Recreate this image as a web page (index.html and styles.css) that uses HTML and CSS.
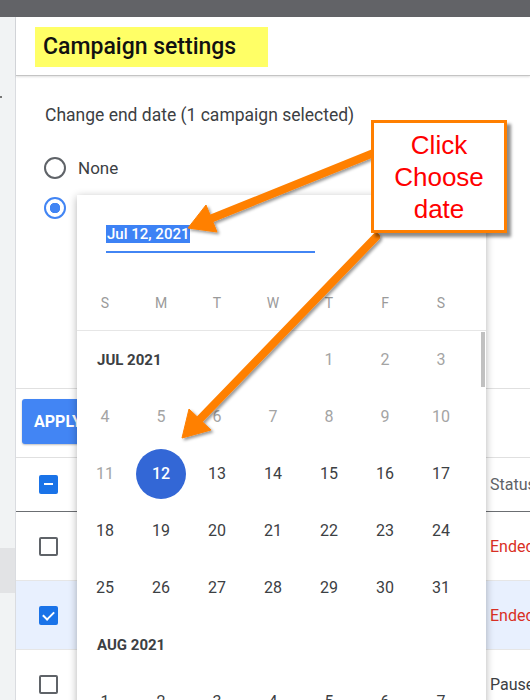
FILE: index.html
```html
<!DOCTYPE html>
<html>
<head>
  <title>Campaign settings</title>
  <link rel="stylesheet" href="styles.css">
</head>
<body>
  <div class="topbar"></div>

  <div class="layout">
    <div class="rail">
      <span class="rail-dot"></span>
      <div class="rail-band"></div>
    </div>

    <div class="panel">
      <div class="panel-head">
        <h1 class="title">Campaign settings</h1>
      </div>

      <div class="settings">
        <p class="label">Change end date (1 campaign selected)</p>
        <div class="radio-row">
          <span class="radio"></span>
          <span>None</span>
        </div>
        <div class="radio-row">
          <span class="radio checked"></span>
        </div>
      </div>

      <div class="actions">
        <button class="apply">APPLY</button>
      </div>

      <!-- campaigns table -->
      <div class="table">
        <div class="row head">
          <div class="cell-check"><span class="box partial"></span></div>
          <div class="cell-gap"></div>
          <div class="cell-status">Status</div>
        </div>
        <div class="row">
          <div class="cell-check"><span class="box"></span></div>
          <div class="cell-gap"></div>
          <div class="cell-status ended">Ended</div>
        </div>
        <div class="row selected">
          <div class="cell-check"><span class="box checked"></span></div>
          <div class="cell-gap"></div>
          <div class="cell-status ended">Ended</div>
        </div>
        <div class="row">
          <div class="cell-check"><span class="box"></span></div>
          <div class="cell-gap"></div>
          <div class="cell-status">Paused</div>
        </div>
      </div>
    </div>
  </div>

  <!-- date picker popup -->
  <div class="picker">
    <div class="date-field">
      <span class="date-value">Jul 12, 2021</span>
    </div>
    <div class="weekdays">
      <span>S</span><span>M</span><span>T</span><span>W</span><span>T</span><span>F</span><span>S</span>
    </div>
    <div class="months">
      <div class="scroll-thumb"></div>
      <div class="days">
        <span class="month">JUL 2021</span>
        <span class="off">1</span><span class="off">2</span><span class="off">3</span>
        <span class="off">4</span><span class="off">5</span><span class="off">6</span><span class="off">7</span><span class="off">8</span><span class="off">9</span><span class="off">10</span>
        <span class="off">11</span><span><b class="picked">12</b></span><span>13</span><span>14</span><span>15</span><span>16</span><span>17</span>
        <span>18</span><span>19</span><span>20</span><span>21</span><span>22</span><span>23</span><span>24</span>
        <span>25</span><span>26</span><span>27</span><span>28</span><span>29</span><span>30</span><span>31</span>
        <span class="month wide">AUG 2021</span>
        <span>1</span><span>2</span><span>3</span><span>4</span><span>5</span><span>6</span><span>7</span>
      </div>
    </div>
  </div>

  <!-- annotation -->
  <svg class="arrows" width="530" height="700" viewBox="0 0 530 700">
    <defs>
      <filter id="shade" x="-10%" y="-10%" width="130%" height="130%">
        <feDropShadow dx="2" dy="2" stdDeviation="1.5" flood-color="#000" flood-opacity="0.4"/>
      </filter>
    </defs>
    <g filter="url(#shade)" fill="#ff8000" stroke="#ff8000">
      <line x1="381" y1="150" x2="210" y2="219" stroke-width="8" stroke-linecap="round"/>
      <polygon points="188,228 206,205 217,232" stroke-width="1" stroke-linejoin="round"/>
      <line x1="376" y1="237" x2="200" y2="419" stroke-width="8" stroke-linecap="round"/>
      <polygon points="182,438 189,409 211,430" stroke-width="1" stroke-linejoin="round"/>
    </g>
  </svg>

  <div class="callout">Click<br>Choose<br>date</div>
</body>
</html>
```

FILE: styles.css
```css
body {
  font-family: Roboto, "Liberation Sans", sans-serif;
  margin: 0;
  width: 530px;
  height: 700px;
  overflow: hidden;
  background-color: #f1f3f4;
  color: #3c4043;
  position: relative;
}

.topbar {
  height: 17px;
  background-color: #626367;
}

.layout {
  display: flex;
  height: 683px;
}

.rail {
  width: 15px;
  flex-shrink: 0;
  background-color: #f1f3f4;
  position: relative;
}
.rail-dot {
  position: absolute;
  left: 0;
  top: 79px;
  width: 2px;
  height: 2px;
  background-color: #777;
}
.rail-band {
  margin-top: 531px;
  height: 45px;
  background-color: #e2e3e5;
}

.panel {
  flex: 1;
  background-color: white;
  border-left: 1px solid #dadce0;
}

.panel-head {
  height: 59px;
  padding: 10px 0 0 19px;
  box-sizing: border-box;
  border-bottom: 1px solid #c4c4c4;
  box-shadow: 0 1px 2px rgba(0,0,0,0.12);
}
.title {
  display: inline-block;
  margin: 0;
  height: 40px;
  width: 233px;
  box-sizing: border-box;
  padding: 0 0 0 8px;
  line-height: 40px;
  font-size: 23px;
  font-weight: 500;
  color: #111;
  background-color: #ffff66;
}

.settings {
  height: 313px;
  box-sizing: border-box;
  padding: 28px 0 0 29px;
  border-bottom: 1px solid #e0e0e0;
}
.label {
  margin: 0 0 22px;
  font-size: 17.5px;
  line-height: 22px;
}
.radio-row {
  display: flex;
  align-items: center;
  gap: 12px;
  height: 40px;
  font-size: 17px;
}
.radio {
  width: 22px;
  height: 22px;
  margin-left: -1px;
  border: 2px solid #5f6368;
  border-radius: 50%;
  box-sizing: border-box;
}
.radio.checked {
  border-color: #4285f4;
  background: radial-gradient(circle, #4285f4 0 5px, white 5.5px);
}

.actions {
  height: 68px;
  padding: 10px 0 0 6px;
  box-sizing: border-box;
}
.apply {
  height: 45px;
  width: 80px;
  border: none;
  border-radius: 3px;
  background-color: #4285f4;
  color: white;
  font-family: Roboto, sans-serif;
  font-size: 16px;
  font-weight: bold;
  text-align: left;
  padding-left: 12px;
  box-shadow: 0 1px 2px rgba(0,0,0,0.25);
}

.table {
  border-top: 1px solid #e0e0e0;
}
.row {
  display: flex;
  align-items: center;
  height: 68px;
  border-bottom: 1px solid #e6e6e6;
}
.row.head {
  height: 53px;
  border-bottom: 1px solid #6b6e72;
}
.row.selected {
  background-color: #e8f0fe;
}
.cell-check {
  width: 64px;
  display: flex;
  justify-content: center;
}
.cell-gap {
  flex: 1;
}
.cell-status {
  width: 40px;
  font-size: 16px;
  white-space: nowrap;
}
.head .cell-status {
  color: #5f6368;
}
.cell-status.ended {
  color: #d93025;
}

.box {
  width: 19px;
  height: 19px;
  box-sizing: border-box;
  border: 2px solid #5f6368;
  border-radius: 2px;
  position: relative;
}
.box.partial,
.box.checked {
  border: none;
  background-color: #1a73e8;
}
.box.partial::after {
  content: "";
  position: absolute;
  left: 5px;
  top: 8px;
  width: 9px;
  height: 2px;
  background-color: white;
}
.box.checked::after {
  content: "";
  position: absolute;
  left: 6px;
  top: 3px;
  width: 5px;
  height: 9px;
  border: solid white;
  border-width: 0 2px 2px 0;
  transform: rotate(45deg);
}

/* date picker */
.picker {
  position: absolute;
  left: 77px;
  top: 195px;
  width: 409px;
  height: 520px;
  background-color: white;
  box-shadow: 0 2px 8px rgba(0,0,0,0.3);
}
.date-field {
  margin: 29px 0 0 29px;
  width: 209px;
  height: 27px;
  border-bottom: 2px solid #4285f4;
}
.date-value {
  font-size: 15px;
  font-weight: 500;
  line-height: 17px;
  color: white;
  background-color: #3d82f5;
  padding: 0 1px;
}
.weekdays {
  display: grid;
  grid-template-columns: repeat(7, 56px);
  height: 54px;
  margin-top: 23px;
  border-bottom: 1px solid #e6e6e6;
  font-size: 14px;
  color: #9a9a9a;
  line-height: 54px;
  text-align: center;
}
.months {
  position: relative;
}
.scroll-thumb {
  position: absolute;
  right: 1px;
  top: 1px;
  width: 4px;
  height: 55px;
  background-color: #c1c1c1;
}
.days {
  display: grid;
  grid-template-columns: repeat(7, 56px);
  grid-auto-rows: 57px;
  font-size: 16px;
  text-align: center;
  align-items: center;
}
.days span {
  display: flex;
  justify-content: center;
  align-items: center;
  height: 57px;
}
.days .off {
  color: #a4a4a4;
}
.days .month {
  grid-column: span 4;
  justify-content: flex-start;
  padding-left: 20px;
  font-size: 15px;
  font-weight: bold;
  color: #3c4043;
}
.days .month.wide {
  grid-column: span 7;
}
.picked {
  width: 50px;
  height: 50px;
  border-radius: 50%;
  background-color: #3367d6;
  color: white;
  display: flex;
  align-items: center;
  justify-content: center;
  font-weight: 500;
}

.arrows {
  position: absolute;
  left: 0;
  top: 0;
  pointer-events: none;
}

.callout {
  position: absolute;
  left: 371px;
  top: 120px;
  width: 136px;
  height: 113px;
  box-sizing: border-box;
  border: 3px solid #ff7f00;
  background-color: white;
  box-shadow: 4px 4px 3px rgba(0,0,0,0.45);
  padding-top: 6px;
  font-family: "Liberation Sans", Arial, sans-serif;
  font-size: 26px;
  line-height: 32px;
  color: #ff0000;
  text-align: center;
}
```
